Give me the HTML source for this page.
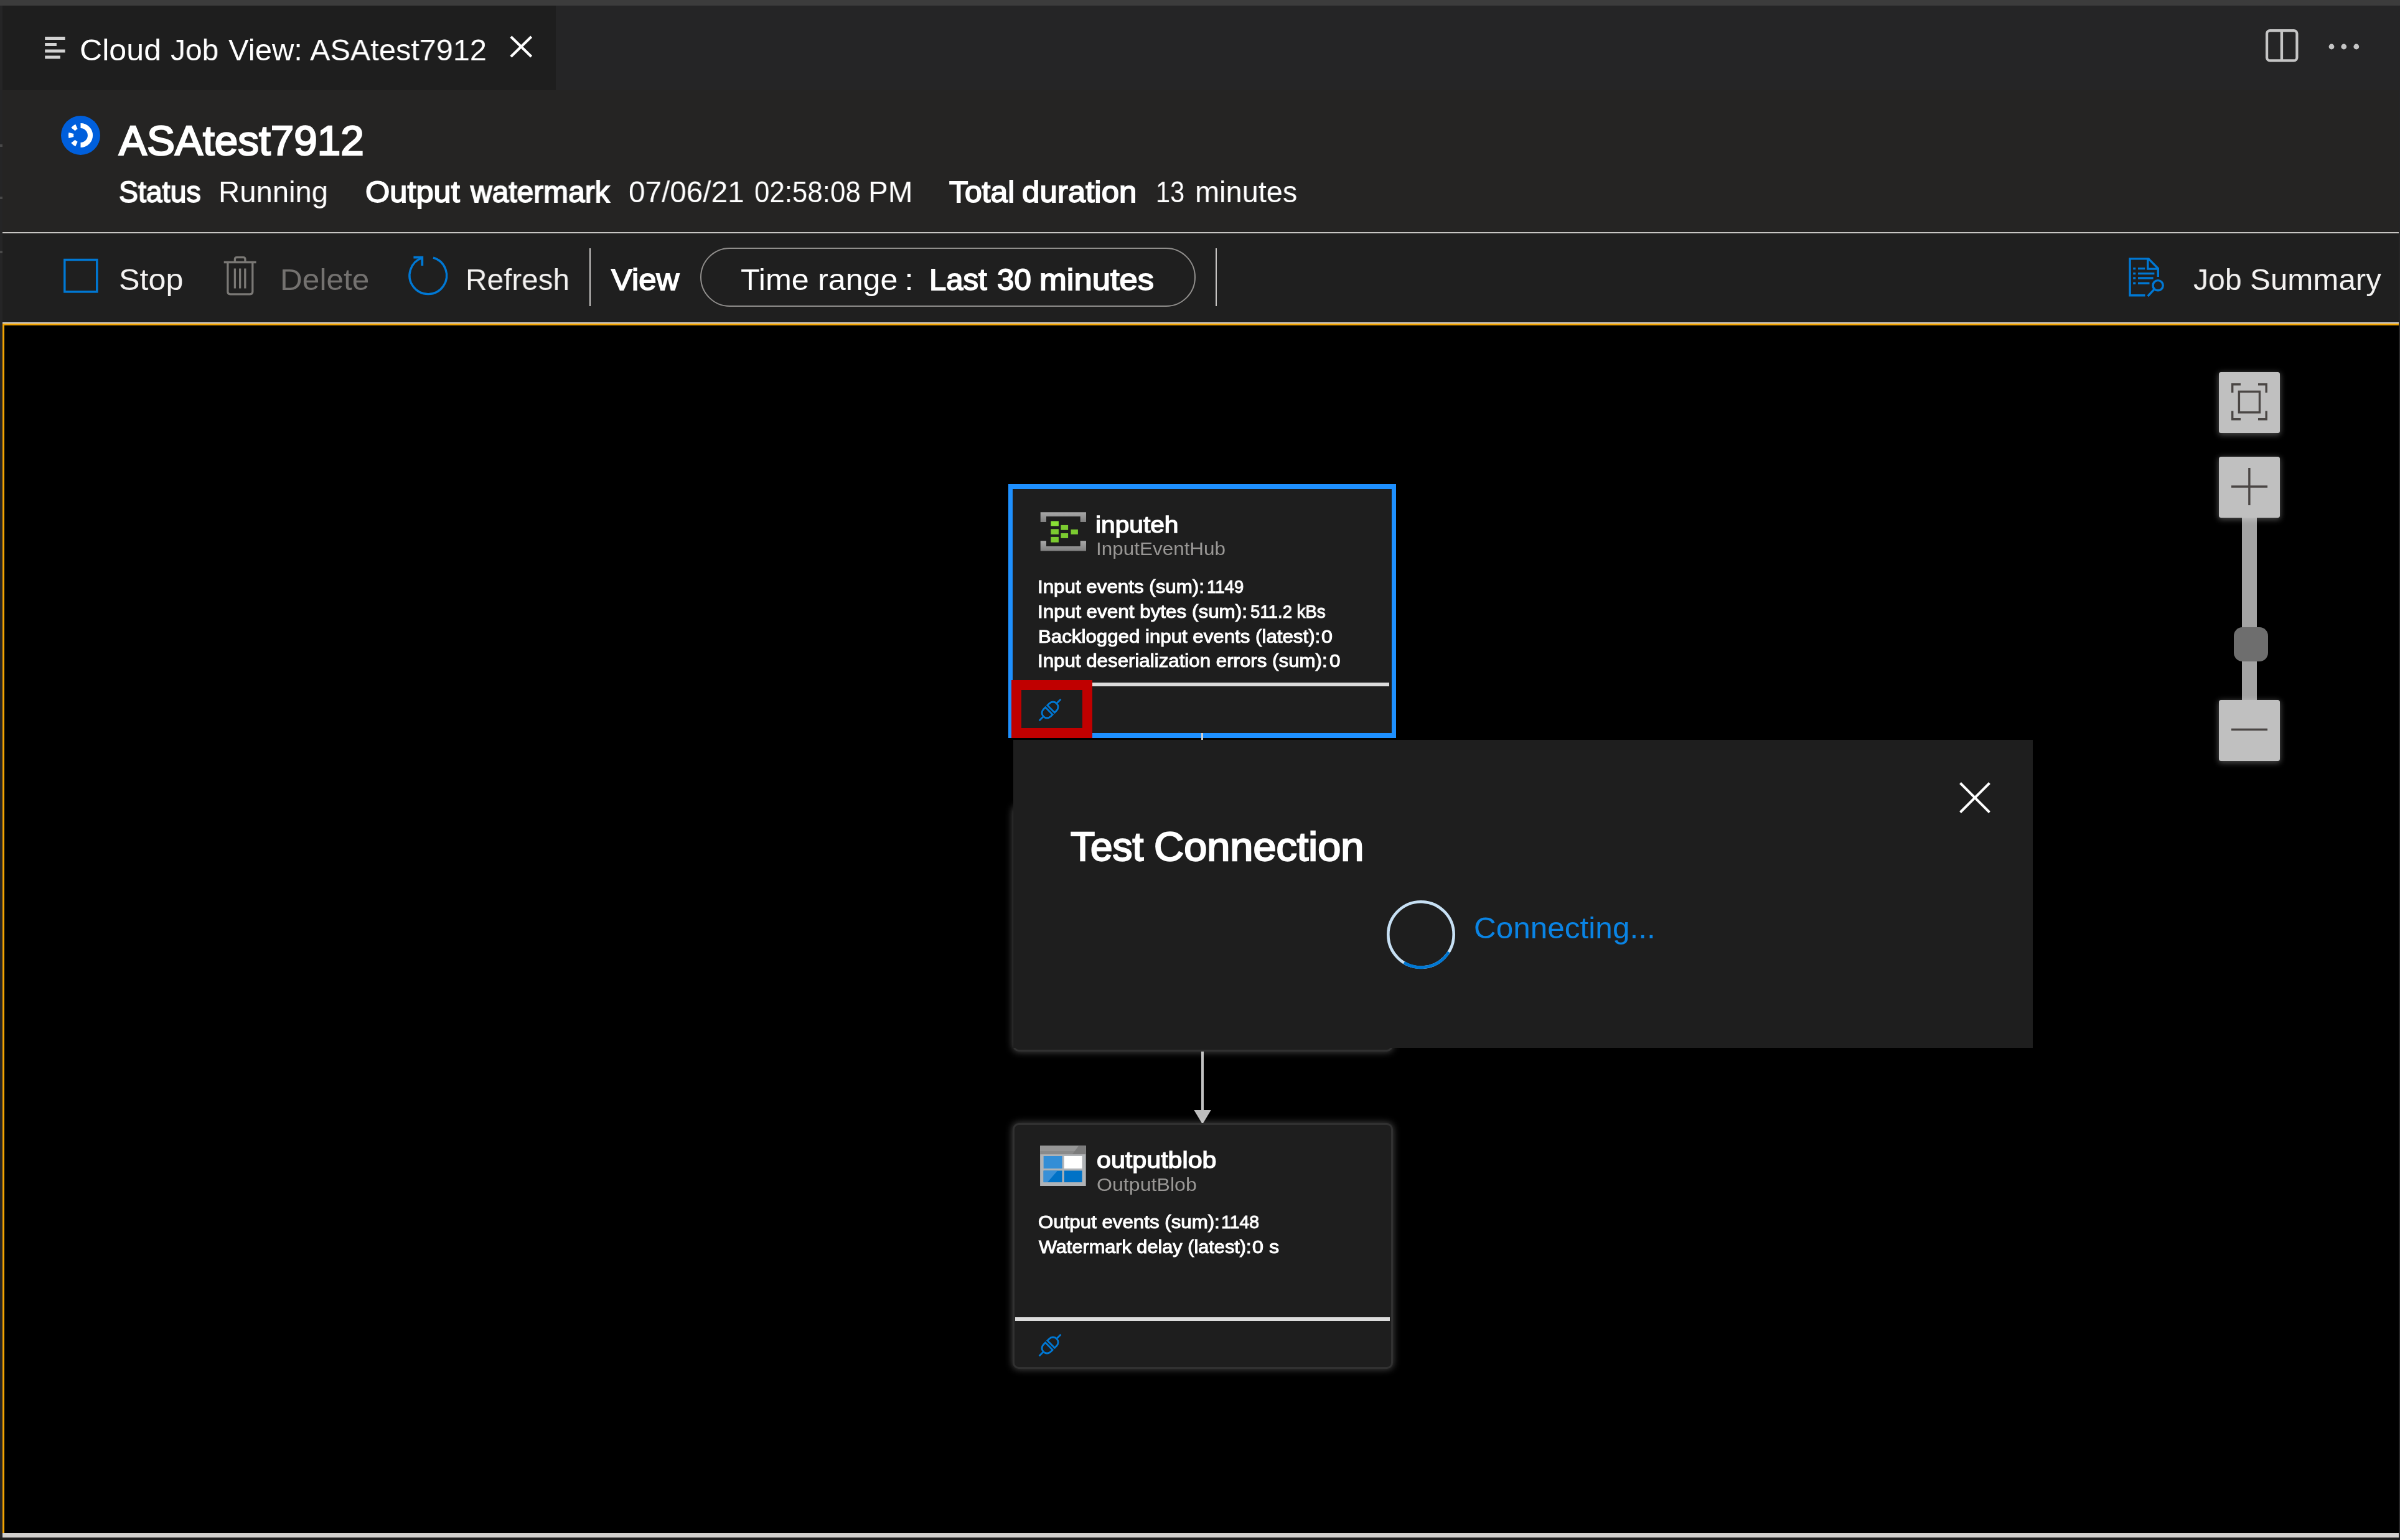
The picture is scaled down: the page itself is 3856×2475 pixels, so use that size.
<!DOCTYPE html>
<html lang="en"><head><meta charset="utf-8"><title>Cloud Job View: ASAtest7912</title>
<style>
html,body{margin:0;padding:0}
body{width:3856px;height:2475px;overflow:hidden;position:relative;background:#252526;font-family:"Liberation Sans",sans-serif}
.a{position:absolute}
.t{position:absolute;will-change:transform;white-space:pre;line-height:normal;transform-origin:0 0;font-family:"Liberation Sans",sans-serif}
svg{position:absolute;overflow:visible}
.zb{width:98.2px;height:98px;background:#c0c0c0;border-radius:3.5px;box-shadow:0 2px 10px 1px rgba(255,255,255,.3)}
.nd{width:605px;height:389px;background:#1e1e1e;border-radius:7px;box-shadow:0 0 0 3px #313131,0 0 12px 4px rgba(255,255,255,.26)}

</style></head>
<body>
<!-- chrome -->
<div class="a" style="left:0;top:0;width:3856px;height:8.6px;background:#3c3c3c"></div>
<div class="a" style="left:4px;top:9px;width:889px;height:136px;background:#1e1e1e"></div>
<div class="a" style="left:4px;top:145px;width:3850px;height:228px;background:#252423"></div>
<div class="a" style="left:4px;top:372.5px;width:3850px;height:2.5px;background:#c8c6c4"></div>
<div class="a" style="left:4px;top:375px;width:3850px;height:143px;background:#1f1f1f"></div>
<div class="a" style="left:0;top:231.8px;width:4px;height:4px;background:#484848"></div>
<div class="a" style="left:0;top:316.4px;width:4px;height:4px;background:#484848"></div>
<div class="a" style="left:0;top:403.3px;width:4px;height:4px;background:#484848"></div>
<!-- canvas -->
<div class="a" style="left:4px;top:517.5px;width:3850px;height:1953.5px;background:#000"></div>
<div class="a" style="left:4px;top:517.5px;width:3850px;height:2.5px;background:#d2d0ce"></div>
<div class="a" style="left:4px;top:520px;width:3850px;height:2.5px;background:#f2a300"></div>
<div class="a" style="left:4px;top:520px;width:3px;height:1944px;background:#f2a300"></div>
<div class="a" style="left:4px;top:2464px;width:3850px;height:7px;background:#d2d0ce"></div>

<div class="a" style="left:0;top:2471px;width:3856px;height:4px;background:#1f1f1f"></div>
<!-- tab icons -->
<svg style="left:0;top:0" width="120" height="120" viewBox="0 0 120 120"><path d="M72.2 61.6 H104.6 M72.2 71.6 H90.9 M72.2 82 H104.6 M72.2 92 H96.8" stroke="#d2d2d2" stroke-width="5" fill="none"/></svg>
<svg style="left:819px;top:57px" width="37" height="37" viewBox="0 0 37 37"><path d="M1.9 1.9 L34.7 34.1 M34.7 1.9 L1.9 34.1" stroke="#fff" stroke-width="4.2" fill="none"/></svg>
<svg style="left:3639.6px;top:46.7px" width="52.5" height="52.5" viewBox="0 0 52.5 52.5"><rect x="2.1" y="2.1" width="48.3" height="48.3" rx="5" fill="none" stroke="#c5c5c5" stroke-width="4.2"/><path d="M25.9 2 V50.5" stroke="#c5c5c5" stroke-width="4.4"/></svg>
<svg style="left:3739.6px;top:68.8px" width="52" height="12" viewBox="0 0 52 12"><g fill="#c5c5c5"><circle cx="6" cy="6" r="4.4"/><circle cx="25.8" cy="6" r="4.4"/><circle cx="45.8" cy="6" r="4.4"/></g></svg>

<!-- header status icon -->
<svg style="left:97.6px;top:185.9px" width="63" height="63" viewBox="0 0 63 63"><circle cx="31.5" cy="31.5" r="31.5" fill="#005fdc"/>
<path d="M31.5 16 A15.5 15.5 0 0 1 31.5 47 M24.95 45.55 A15.5 15.5 0 0 1 19.45 41.25 M16.40 34.99 A15.5 15.5 0 0 1 16.40 28.01 M19.45 21.75 A15.5 15.5 0 0 1 24.95 17.45" fill="none" stroke="#fff" stroke-width="8.2"/></svg>

<!-- toolbar icons -->
<svg style="left:100px;top:414px" width="60" height="60" viewBox="0 0 60 60"><rect x="3.8" y="3.5" width="52" height="51.4" fill="none" stroke="#0078d4" stroke-width="3.5"/></svg>
<svg style="left:340px;top:395px" width="100" height="95" viewBox="0 0 100 95"><g fill="none" stroke="#7a7875" stroke-width="3.3"><path d="M19.7 26.5 H71.6"/><path d="M37.4 26.5 V21.6 Q37.4 18.6 40.4 18.6 H50.9 Q53.9 18.6 53.9 21.6 V26.5"/><path d="M25.9 26.5 V73.8 Q25.9 77.8 29.9 77.8 H61.8 Q65.8 77.8 65.8 73.8 V26.5"/><path d="M37.4 36.4 V68.5 M45.65 36.4 V68.5 M53.8 36.4 V68.5"/></g></svg>
<svg style="left:640px;top:395px" width="100" height="95" viewBox="0 0 100 95"><g fill="none" stroke="#0078d4" stroke-width="3.4"><path d="M56.0 19.15 A29.8 29.8 0 1 1 38.6 19.46"/><path d="M24.4 18.6 H38.3 V32" stroke-width="3.8"/></g></svg>
<div class="a" style="left:947px;top:399px;width:2px;height:93px;background:#c8c6c4"></div>
<div class="a" style="left:1124.6px;top:398.4px;width:792px;height:90.2px;border:2px solid #908e8c;border-radius:48px"></div>
<div class="a" style="left:1953px;top:399px;width:2px;height:93px;background:#c8c6c4"></div>
<svg style="left:3400px;top:400px" width="100" height="90" viewBox="0 0 100 90"><g fill="none" stroke="#0078d4" stroke-width="3.4"><path d="M46.5 74.7 H22.1 V15.9 H52 L67.3 31.5 V45"/><path d="M50.8 16 V32.1 H67"/><path d="M35 31.6 H46.2 M35 39.6 H61.4 M35 47 H59.6 M35 55.2 H53.5"/><path d="M27.2 31.6 H31.3 M27.2 39.6 H31.3 M27.2 47 H31.3 M27.2 55.2 H31.3"/><circle cx="67.1" cy="58.7" r="8.1"/><path d="M61.2 64.8 L50.8 76"/></g></svg>

<!-- edges -->
<div class="a" style="left:1930px;top:1186px;width:3px;height:110px;background:#c8c8c8"></div>
<div class="a" style="left:1930px;top:1688px;width:3.6px;height:100px;background:#c0c0c0"></div>
<svg style="left:1918px;top:1783px" width="28" height="24" viewBox="0 0 28 24"><path d="M0.3 1 H27.7 L14 23.8 Z" fill="#bdbdbd"/></svg>

<!-- node 2 (behind dialog) -->
<div class="a nd" style="left:1629.5px;top:1297.5px"></div>

<!-- node 1 -->
<div class="a" style="left:1619.9px;top:778.2px;width:623.1px;height:407.4px;background:#1e90ff"></div>
<div class="a" style="left:1627.3px;top:785.7px;width:608.3px;height:392.5px;background:#1e1e1e"></div>
<div class="a" style="left:1930px;top:1178px;width:3px;height:12px;background:#d0d0d0"></div>
<div class="a" style="left:1754px;top:1097px;width:478px;height:6px;background:#dcdcdc"></div>
<div class="a" style="left:1625px;top:1093px;width:98px;height:61px;border:16px solid #c00000;background:#1e1e1e"></div>
<!-- eventhub icon -->
<svg style="left:1671px;top:823px" width="75" height="64" viewBox="0 0 75 64"><defs><linearGradient id="gb" x1="0" y1="0" x2="0" y2="1"><stop offset="0" stop-color="#a8a8a8"/><stop offset="1" stop-color="#808080"/></linearGradient></defs>
<path d="M0.7 0.15 H74 V15.9 H64.7 V6.9 H10 V15.9 H0.7 Z" fill="url(#gb)"/><path d="M0.7 62.4 H74 V46.3 H64.7 V55.1 H10 V46.3 H0.7 Z" fill="url(#gb)"/>
<g fill="#7bcb30"><rect x="17.3" y="14.5" width="12.6" height="7.9" fill="#88e035"/><rect x="17.3" y="27.3" width="12.6" height="8.5"/><rect x="17.3" y="39.9" width="12.6" height="8.8"/><rect x="33.4" y="20.9" width="11.7" height="7.9"/><rect x="33.4" y="34" width="11.7" height="7.9"/><rect x="49.5" y="27.9" width="11.4" height="7.9"/></g></svg>
<!-- plug icon 1 -->
<svg style="left:1666px;top:1120px" width="42" height="42" viewBox="-21 -21 42 42"><g transform="rotate(-45)" fill="none" stroke="#0078d4" stroke-width="2.8"><path d="M-2.3 -8.2 H-6.8 A8.2 8.2 0 0 0 -6.8 8.2 H-2.3 Z M2.3 -8.2 H6.8 A8.2 8.2 0 0 1 6.8 8.2 H2.3 Z M-24.5 0 H-15 M15 0 H24.5"/></g></svg>

<!-- node 3 -->
<div class="a nd" style="left:1629.5px;top:1808px"></div>
<div class="a" style="left:1631px;top:2117px;width:602px;height:6px;background:#dcdcdc"></div>
<!-- blob icon -->
<svg style="left:1671px;top:1841px" width="75" height="66" viewBox="0 0 75 66"><rect x="0.1" y="0.4" width="73.6" height="64.6" fill="#b0b3b6"/><rect x="0.1" y="0.4" width="73.6" height="13.7" fill="#969696"/><rect x="0.1" y="9" width="73.6" height="5.1" fill="#8a8a8a"/><path d="M62 0.4 H73.7 V14.1 H52 Z" fill="#7c7c7c"/><rect x="5.65" y="17" width="29.85" height="19.9" fill="#338ed6"/><rect x="38.7" y="17" width="28.9" height="19.9" fill="#fff"/><rect x="5.65" y="40.4" width="29.85" height="18.7" fill="#0072c6"/><path d="M5.65 40.4 H28 L12 59.1 H5.65 Z" fill="#3890d7"/><rect x="38.7" y="40.4" width="28.9" height="18.7" fill="#0072c6"/></svg>
<!-- plug icon 3 -->
<svg style="left:1666px;top:2140.5px" width="42" height="42" viewBox="-21 -21 42 42"><g transform="rotate(-45)" fill="none" stroke="#0078d4" stroke-width="2.8"><path d="M-2.3 -8.2 H-6.8 A8.2 8.2 0 0 0 -6.8 8.2 H-2.3 Z M2.3 -8.2 H6.8 A8.2 8.2 0 0 1 6.8 8.2 H2.3 Z M-24.5 0 H-15 M15 0 H24.5"/></g></svg>

<!-- dialog -->
<div class="a" style="left:1627.6px;top:1189.3px;width:1638.6px;height:494.5px;background:#1e1e1e"></div>
<svg style="left:3147.7px;top:1256.9px" width="50" height="50" viewBox="0 0 50 50"><path d="M1.5 1.5 L48.5 48.5 M48.5 1.5 L1.5 48.5" stroke="#fff" stroke-width="4" fill="none"/></svg>
<svg style="left:2226.3px;top:1445.3px" width="114" height="114" viewBox="-57 -57 114 114"><circle r="52.7" fill="none" stroke="#c7e0f4" stroke-width="4.6"/><path d="M44.69 27.93 A52.7 52.7 0 0 1 -27.14 45.17" fill="none" stroke="#0078d4" stroke-width="4.8"/></svg>

<!-- zoom controls -->
<div class="a" style="left:3602.3px;top:828px;width:24px;height:300px;background:#a3a3a3"></div>
<div class="a zb" style="left:3565.3px;top:597.8px"></div>
<div class="a zb" style="left:3565.3px;top:734.3px"></div>
<div class="a zb" style="left:3565.3px;top:1124.8px"></div>
<div class="a" style="left:3589px;top:1008px;width:54.7px;height:54.5px;border-radius:14px;background:#6e6e6e"></div>
<svg style="left:3565.3px;top:597.8px" width="98.2" height="98" viewBox="0 0 98.2 98"><g fill="none" stroke="#4a4644" stroke-width="3.4"><rect x="32.4" y="31.35" width="33.1" height="33.45"/><path d="M21.7 33 V19.7 H35 M63 19.7 H76.2 V33 M76.2 62.5 V75.7 H63 M35 75.7 H21.7 V62.5"/></g></svg>
<svg style="left:3565.3px;top:734.3px" width="98.2" height="98" viewBox="0 0 98.2 98"><path d="M20 47.95 H78.1 M48.9 18.1 V77.9" stroke="#4a4644" stroke-width="3.4" fill="none"/></svg>
<svg style="left:3565.3px;top:1124.8px" width="98.2" height="98" viewBox="0 0 98.2 98"><path d="M20 47.5 H78.1" stroke="#4a4644" stroke-width="3.4" fill="none"/></svg>

<span class="t" style="left:127.95px;top:52.00px;font-size:49px;font-weight:400;color:#ffffff;transform:scaleX(1.0236)">Cloud</span>
<span class="t" style="left:274.00px;top:52.00px;font-size:49px;font-weight:400;color:#ffffff;transform:scaleX(0.9775)">Job</span>
<span class="t" style="left:366.70px;top:52.00px;font-size:49px;font-weight:400;color:#ffffff;transform:scaleX(0.9972)">View:</span>
<span class="t" style="left:498.30px;top:52.00px;font-size:49px;font-weight:400;color:#ffffff;transform:scaleX(0.9927)">ASAtest7912</span>
<span class="t" style="left:191.00px;top:187.00px;font-size:67px;font-weight:400;color:#ffffff;-webkit-text-stroke:2.41px #ffffff;transform:scaleX(1.0068)">ASAtest7912</span>
<span class="t" style="left:190.81px;top:280.00px;font-size:49px;font-weight:400;color:#fff;-webkit-text-stroke:1.76px #fff;transform:scaleX(0.9475)">Status</span>
<span class="t" style="left:351.14px;top:280.00px;font-size:49px;font-weight:400;color:#fff;transform:scaleX(0.9644)">Running</span>
<span class="t" style="left:586.69px;top:280.00px;font-size:49px;font-weight:400;color:#fff;-webkit-text-stroke:1.76px #fff;transform:scaleX(1.0311)">Output</span>
<span class="t" style="left:755.98px;top:280.00px;font-size:49px;font-weight:400;color:#fff;-webkit-text-stroke:1.76px #fff;transform:scaleX(0.9774)">watermark</span>
<span class="t" style="left:1010.28px;top:280.00px;font-size:49px;font-weight:400;color:#fff;transform:scaleX(0.9734)">07/06/21</span>
<span class="t" style="left:1211.60px;top:280.00px;font-size:49px;font-weight:400;color:#fff;transform:scaleX(0.8953)">02:58:08</span>
<span class="t" style="left:1394.87px;top:280.00px;font-size:49px;font-weight:400;color:#fff;transform:scaleX(0.9706)">PM</span>
<span class="t" style="left:1525.23px;top:280.00px;font-size:49px;font-weight:400;color:#fff;-webkit-text-stroke:1.76px #fff;transform:scaleX(1.0164)">Total</span>
<span class="t" style="left:1641.67px;top:280.00px;font-size:49px;font-weight:400;color:#fff;-webkit-text-stroke:1.76px #fff;transform:scaleX(1.0415)">duration</span>
<span class="t" style="left:1857.46px;top:280.00px;font-size:49px;font-weight:400;color:#fff;transform:scaleX(0.8457)">13</span>
<span class="t" style="left:1919.63px;top:280.00px;font-size:49px;font-weight:400;color:#fff;transform:scaleX(0.9577)">minutes</span>
<span class="t" style="left:190.65px;top:421.00px;font-size:49px;font-weight:400;color:#f3f2f1;transform:scaleX(1.0251)">Stop</span>
<span class="t" style="left:449.95px;top:421.00px;font-size:49px;font-weight:400;color:#747270;transform:scaleX(1.0118)">Delete</span>
<span class="t" style="left:748.10px;top:421.00px;font-size:49px;font-weight:400;color:#f3f2f1;transform:scaleX(0.9739)">Refresh</span>
<span class="t" style="left:982.00px;top:421.00px;font-size:49px;font-weight:400;color:#fff;-webkit-text-stroke:1.76px #fff;transform:scaleX(1.0384)">View</span>
<span class="t" style="left:1189.77px;top:421.00px;font-size:49px;font-weight:400;color:#fff;transform:scaleX(1.0256)">Time</span>
<span class="t" style="left:1313.62px;top:421.00px;font-size:49px;font-weight:400;color:#fff;transform:scaleX(1.0250)">range</span>
<span class="t" style="left:1452.70px;top:421.00px;font-size:49px;font-weight:400;color:#fff;transform:scaleX(1.1000)">:</span>
<span class="t" style="left:1492.70px;top:421.00px;font-size:49px;font-weight:400;color:#fff;-webkit-text-stroke:1.76px #fff;transform:scaleX(1.0011)">Last</span>
<span class="t" style="left:1601.50px;top:421.00px;font-size:49px;font-weight:400;color:#fff;-webkit-text-stroke:1.76px #fff;transform:scaleX(1.0048)">30</span>
<span class="t" style="left:1670.08px;top:421.00px;font-size:49px;font-weight:400;color:#fff;-webkit-text-stroke:1.76px #fff;transform:scaleX(1.0726)">minutes</span>
<span class="t" style="left:3523.80px;top:421.00px;font-size:49px;font-weight:400;color:#f3f2f1;transform:scaleX(0.9826)">Job</span>
<span class="t" style="left:3614.99px;top:421.00px;font-size:49px;font-weight:400;color:#f3f2f1;transform:scaleX(1.0061)">Summary</span>
<span class="t" style="left:1760.30px;top:823.00px;font-size:37px;font-weight:400;color:#fff;-webkit-text-stroke:1.33px #fff;transform:scaleX(1.0992)">inputeh</span>
<span class="t" style="left:1761.37px;top:865.00px;font-size:29.5px;font-weight:400;color:#999795;transform:scaleX(1.0661)">InputEventHub</span>
<span class="t" style="left:1667.38px;top:926.00px;font-size:29.5px;font-weight:400;color:#fff;-webkit-text-stroke:1.06px #fff;transform:scaleX(1.0612)">Input events (sum):</span>
<span class="t" style="left:1939.13px;top:926.00px;font-size:29.5px;font-weight:400;color:#fff;-webkit-text-stroke:1.06px #fff;transform:scaleX(0.9340)">1149</span>
<span class="t" style="left:1667.37px;top:966.00px;font-size:29.5px;font-weight:400;color:#fff;-webkit-text-stroke:1.06px #fff;transform:scaleX(1.0648)">Input event bytes (sum):</span>
<span class="t" style="left:2008.56px;top:966.00px;font-size:29.5px;font-weight:400;color:#fff;-webkit-text-stroke:1.06px #fff;transform:scaleX(0.9351)">511.2 kBs</span>
<span class="t" style="left:1668.08px;top:1006.00px;font-size:29.5px;font-weight:400;color:#fff;-webkit-text-stroke:1.06px #fff;transform:scaleX(1.0590)">Backlogged input events (latest):</span>
<span class="t" style="left:2123.21px;top:1006.00px;font-size:29.5px;font-weight:400;color:#fff;-webkit-text-stroke:1.06px #fff;transform:scaleX(1.0933)">0</span>
<span class="t" style="left:1667.38px;top:1045.00px;font-size:29.5px;font-weight:400;color:#fff;-webkit-text-stroke:1.06px #fff;transform:scaleX(1.0598)">Input deserialization errors (sum):</span>
<span class="t" style="left:2135.53px;top:1045.00px;font-size:29.5px;font-weight:400;color:#fff;-webkit-text-stroke:1.06px #fff;transform:scaleX(1.0667)">0</span>
<span class="t" style="left:1762.14px;top:1844.00px;font-size:37px;font-weight:400;color:#fff;-webkit-text-stroke:1.33px #fff;transform:scaleX(1.1139)">outputblob</span>
<span class="t" style="left:1762.16px;top:1887.00px;font-size:29.5px;font-weight:400;color:#999795;transform:scaleX(1.0893)">OutputBlob</span>
<span class="t" style="left:1668.04px;top:1947.00px;font-size:29.5px;font-weight:400;color:#fff;-webkit-text-stroke:1.06px #fff;transform:scaleX(1.0593)">Output events (sum):</span>
<span class="t" style="left:1961.68px;top:1947.00px;font-size:29.5px;font-weight:400;color:#fff;-webkit-text-stroke:1.06px #fff;transform:scaleX(0.9618)">1148</span>
<span class="t" style="left:1669.10px;top:1987.00px;font-size:29.5px;font-weight:400;color:#fff;-webkit-text-stroke:1.06px #fff;transform:scaleX(1.0398)">Watermark delay (latest):</span>
<span class="t" style="left:2012.41px;top:1987.00px;font-size:29.5px;font-weight:400;color:#fff;-webkit-text-stroke:1.06px #fff;transform:scaleX(1.0930)">0 s</span>
<span class="t" style="left:1720.00px;top:1324.00px;font-size:64px;font-weight:400;color:#fff;-webkit-text-stroke:2.30px #fff;transform:scaleX(1.0001)">Test</span>
<span class="t" style="left:1853.98px;top:1324.00px;font-size:64px;font-weight:400;color:#fff;-webkit-text-stroke:2.30px #fff;transform:scaleX(1.0417)">Connection</span>
<span class="t" style="left:2367.98px;top:1463.00px;font-size:49px;font-weight:400;color:#0a84e4;transform:scaleX(1.0102)">Connecting...</span>
</body></html>
